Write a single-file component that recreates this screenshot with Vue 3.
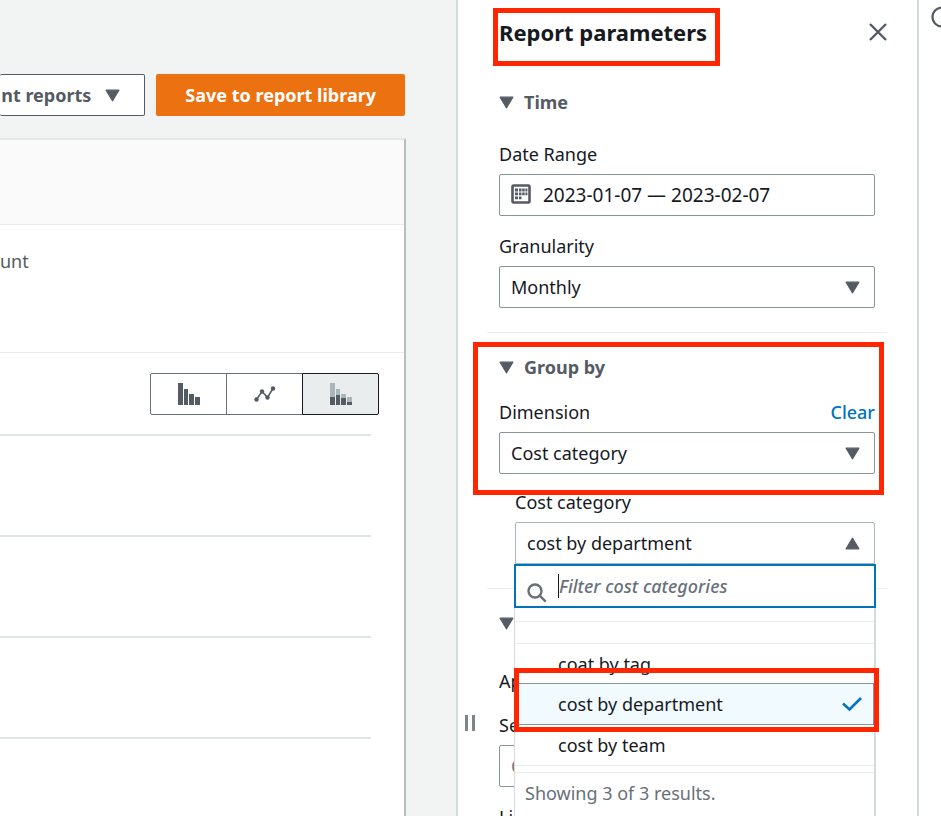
<script setup>
import { ref } from 'vue'

const granularity = ref('Monthly')
const dimension = ref('Cost category')
const category = ref('cost by department')
const filter = ref('')
const chart = ref('stack')
const dates = ref('2023-01-07 — 2023-02-07')
const categories = ['coat by tag', 'cost by department', 'cost by team']
</script>

<template>
  <div class="app">
    <main class="main">
      <div class="toolbar">
        <button class="btn recent" type="button">
          nt reports
          <svg class="caret" viewBox="0 0 14 12"><path d="M1 1h12L7 11z" /></svg>
        </button>
        <button class="btn primary" type="button">Save to report library</button>
      </div>
      <section class="card">
        <header class="card-head"></header>
        <div class="summary">unt</div>
        <div class="chart">
          <div class="segments" role="group" aria-label="Chart type">
            <button type="button" aria-label="Bar" :class="{ on: chart === 'bar' }" @click="chart = 'bar'">
              <svg viewBox="0 0 22 22" width="22" height="22" fill="#545b64">
                <path d="M0 0h5v22H0zM6 6h4v16H6zM11 11h5v11h-5zM17 14h5v8h-5z" />
              </svg>
            </button>
            <button type="button" aria-label="Line" :class="{ on: chart === 'line' }" @click="chart = 'line'">
              <svg viewBox="0 0 22 22" width="22" height="22" fill="#545b64">
                <path d="M2.500 16.500 8 8.500l5.500 6 5.500-9" fill="none" stroke="#545b64" stroke-width="1.500" />
                <circle cx="2.500" cy="16.500" r="2.200" /><circle cx="8" cy="8.500" r="2.200" />
                <circle cx="13.500" cy="14.500" r="2.200" /><circle cx="19" cy="5.500" r="2.200" />
              </svg>
            </button>
            <button type="button" aria-label="Stack" :class="{ on: chart === 'stack' }" @click="chart = 'stack'">
              <svg viewBox="0 0 22 22" width="22" height="22">
                <path d="M0 0h5v14H0zM6 6h4v6H6zM11 11h5v4h-5zM17 14h5v5h-5z" fill="#aab7b8" />
                <path d="M0 14h5v8H0zM6 12h4v10H6zM11 15h5v7h-5zM17 19h5v3h-5z" fill="#545b64" />
              </svg>
            </button>
          </div>
          <div class="grid">
            <div v-for="n in 4" :key="n" class="grid-line"></div>
          </div>
        </div>
      </section>
    </main>

    <aside class="panel">
      <span class="grip" aria-hidden="true"></span>
      <header class="panel-head">
        <h2>Report parameters<span class="mark mark-title"></span></h2>
        <button class="close" type="button" aria-label="Close">
          <svg viewBox="0 0 18 18" width="18" height="18"><path d="M1 1l16 16M17 1L1 17" fill="none" stroke="#545b64" stroke-width="2.400" /></svg>
        </button>
      </header>

      <section class="section time">
        <h3><svg class="caret" viewBox="0 0 14 12"><path d="M1 1h12L7 11z" /></svg>Time</h3>
        <div class="fields">
          <div class="field">
            <label for="dates">Date Range</label>
            <div class="control">
              <svg class="calendar" viewBox="0 0 20 20" width="20" height="20">
                <rect x="1.500" y="1.500" width="17" height="17" rx="1" fill="none" stroke="#545b64" stroke-width="2.600" />
                <path fill="#545b64" d="M4 4.500h3v3H4zM8 4.500h2.500v3H8zM11.200 4.500h2.500v3h-2.500zM14.400 4.500h2v3h-2zM4 8.500h3v2.700H4zM8 8.500h2.500v2.700H8zM11.200 8.500h2.500v2.700h-2.500zM14.400 8.500h2v2.700h-2zM4 12.500h3v2.700H4zM8 12.500h2.500v2.700H8z" />
              </svg>
              <input id="dates" v-model="dates" class="box with-icon" type="text" />
            </div>
          </div>
          <div class="field">
            <label for="granularity">Granularity</label>
            <div class="control">
              <select id="granularity" v-model="granularity" class="box"><option>Monthly</option></select>
              <svg class="caret end" viewBox="0 0 14 12"><path d="M1 1h12L7 11z" /></svg>
            </div>
          </div>
        </div>
      </section>

      <section class="section group">
        <span class="mark mark-group"></span>
        <h3><svg class="caret" viewBox="0 0 14 12"><path d="M1 1h12L7 11z" /></svg>Group by</h3>
        <div class="fields">
          <div class="field">
            <div class="label-row">
              <label for="dimension">Dimension</label>
              <a href="#clear">Clear</a>
            </div>
            <div class="control">
              <select id="dimension" v-model="dimension" class="box"><option>Cost category</option></select>
              <svg class="caret end" viewBox="0 0 14 12"><path d="M1 1h12L7 11z" /></svg>
            </div>
          </div>
          <div class="field nested">
            <label for="category">Cost category</label>
            <div class="control">
              <select id="category" v-model="category" class="box open">
                <option v-for="c in categories" :key="c">{{ c }}</option>
              </select>
              <svg class="caret end" viewBox="0 0 14 12"><path d="M1 11h12L7 1z" /></svg>
              <div class="menu">
                <div class="search">
                  <svg viewBox="0 0 20 20" width="20" height="20"><g fill="none" stroke="#687078" stroke-width="2.400"><circle cx="8" cy="8" r="6.500" /><path d="M12.700 12.700l6 6" /></g></svg>
                  <span class="cursor"></span>
                  <input v-model="filter" type="text" placeholder="Filter cost categories" aria-label="Filter cost categories" />
                </div>
                <div class="spacer"></div>
                <ul role="listbox" aria-label="Cost categories">
                  <li v-for="c in categories" :key="c" role="option" :aria-selected="c === category" :class="{ selected: c === category }" @click="category = c">
                    {{ c }}
                    <template v-if="c === category">
                      <svg viewBox="0 0 20 16" width="20" height="16"><path d="M1 7.500l6.500 6L19 2" fill="none" stroke="#0073bb" stroke-width="2.500" /></svg>
                      <span class="mark mark-option"></span>
                    </template>
                  </li>
                </ul>
                <div class="results">Showing 3 of 3 results.</div>
              </div>
            </div>
          </div>
        </div>
      </section>

      <section class="section filters">
        <h3><svg class="caret" viewBox="0 0 14 12"><path d="M1 1h12L7 11z" /></svg></h3>
        <p>Ap</p>
        <div class="fields">
          <div class="field">
            <label for="service">Se</label>
            <input id="service" class="box" type="text" placeholder="C" />
          </div>
          <p>Li</p>
        </div>
      </section>
    </aside>

    <nav class="rail" aria-label="Help">
      <button type="button" aria-label="Info">
        <svg viewBox="0 0 22 22" width="22" height="22"><circle cx="11" cy="11" r="9.500" fill="none" stroke="#545b64" stroke-width="2.200" /></svg>
      </button>
    </nav>
  </div>
</template>

<style>
body { background: #f2f3f3; }
</style>

<style scoped>
* { box-sizing: border-box; }
.app {
  display: flex;
  height: 100vh;
  overflow: hidden;
  font-family: "Noto Sans", "Open Sans", sans-serif;
  font-size: 18px;
  line-height: 24px;
  color: #16191f;
}
button, input, select { font: inherit; color: inherit; margin: 0; }
button { cursor: pointer; }
h2, h3, p, ul { margin: 0; padding: 0; }
.caret { width: 15px; height: 13px; fill: #545b64; stroke: #545b64; stroke-width: 1px; stroke-linejoin: round; flex: none; }

.main { flex: 1; min-width: 0; display: flex; flex-direction: column; padding: 74px 51px 0 0; background: #f2f3f3; }
.toolbar { display: flex; justify-content: space-between; gap: 11px; }
.btn { height: 42px; display: flex; align-items: center; border-radius: 2px; font-weight: 700; white-space: nowrap; }
.recent { flex: 1; justify-content: flex-end; gap: 14px; padding: 0 24px 0 0; background: #fff; color: #545b64; border: 1px solid #545b64; border-left: 0; }
.primary { padding: 0 29px; border: 0; background: #ec7211; color: #fff; }
.card { flex: 1; margin: 22px -1px 0 0; display: flex; flex-direction: column; background: #fff; border-top: 2px solid #e4e8e8; border-right: 2px solid #b4bfc0; }
.card-head { height: 85px; background: #fafafa; border-bottom: 1px solid #eaeded; }
.summary { height: 128px; padding-top: 24px; color: #545b64; border-bottom: 1px solid #eaeded; }
.chart { padding: 20px 25px 0 0; }
.segments { display: flex; justify-content: flex-end; }
.segments button { width: 77px; height: 42px; margin-left: -1px; padding: 0; display: flex; align-items: center; justify-content: center; background: #fff; border: 1px solid #687078; }
.segments button:first-child { border-radius: 2px 0 0 2px; }
.segments button:last-child { border-radius: 0 2px 2px 0; }
.segments .on { background: #eaeded; border-color: #16191f; }
.grid { margin: 19px 8px 0 0; display: flex; flex-direction: column; gap: 99px; }
.grid-line { height: 2px; background: #dfe4e4; }

.panel { position: relative; flex: none; width: 463px; padding: 16px 30px 0 29px; background: #fff; border-left: 2px solid #d5dbdb; border-right: 2px solid #d5dbdb; }
.grip { position: absolute; left: 7px; top: 715px; width: 10px; height: 16px; border: solid #7d848b; border-width: 0 3px; }
.panel-head { display: flex; justify-content: space-between; align-items: center; padding: 0 0 0 12px; }
h2 { position: relative; font-size: 22px; line-height: 32px; font-weight: 700; }
.close { padding: 0; border: 0; background: none; display: flex; }
h3 { display: flex; align-items: center; gap: 10px; height: 24px; font-size: 18px; line-height: 24px; font-weight: 700; color: #545b64; }
.section { position: relative; padding: 22px 12px 24px; }
.section + .section { border-top: 1px solid #eaeded; }
.time { padding-top: 42px; }
.fields { display: flex; flex-direction: column; gap: 18px; margin-top: 20px; }
.time .fields { margin-top: 28px; }
.group .fields { gap: 16px; margin-top: 21px; }
.field { display: flex; flex-direction: column; gap: 8px; }
.label-row { display: flex; justify-content: space-between; }
.nested { margin-left: 16px; }
a { color: #0073bb; text-decoration: none; font-weight: 500; }
.control { position: relative; }
.box { display: block; width: 100%; height: 42px; padding: 0 11px; border: 1px solid #879596; border-radius: 2px; background: #fff; appearance: none; outline: 0; }
.with-icon { padding-left: 43px; font-size: 19px; }
.calendar { position: absolute; left: 12px; top: 10px; }
.end { position: absolute; right: 15px; top: 15px; pointer-events: none; }
.open { border-color: #aab7b8; border-radius: 2px 2px 0 0; }

.menu { position: absolute; z-index: 1; top: 42px; left: -1px; right: -1px; background: #fff; border: solid #d5dbdb; border-width: 0 2px 1px 1px; }
.search { display: flex; align-items: center; height: 44px; margin: 0 -2px 0 -1px; padding: 0 11px; border: 2px solid #0073bb; }
.search svg { flex: none; margin-top: 14px; }
.search input { flex: 1; min-width: 0; padding: 0; border: 0; outline: 0; background: none; font-style: italic; }
.search input::placeholder { color: #687078; font-weight: 500; opacity: 1; }
.cursor { width: 1px; height: 24px; margin-left: 11px; background: #16191f; }
.spacer { height: 36px; border: solid #eaeded; border-width: 0 0 1px; background: linear-gradient(#eaeded, #eaeded) 0 13px / 100% 1px no-repeat; }
ul { list-style: none; }
li { position: relative; display: flex; align-items: center; justify-content: space-between; height: 40px; padding: 0 11px 0 43px; }
.selected { height: 42px; margin-top: -1px; padding-right: 11px; background: #f1faff; border: solid #879596; border-width: 1px 1px 1px 0; }
.results { height: 60px; padding: 15px 10px 0; color: #687078; border-top: 1px solid #eaeded; background: linear-gradient(#eaeded, #eaeded) 0 6px / 100% 1px no-repeat; }

.mark { position: absolute; z-index: 2; border: 5px solid #ff2600; pointer-events: none; }
.mark-title { left: -6px; top: -8px; right: -13px; height: 58px; }
.mark-group { left: -14px; right: 3px; top: 9px; height: 153px; }
.mark-option { left: -1px; right: -6px; top: -16px; bottom: -8px; }
.filters p { height: 24px; }
.filters > p { margin-top: 34px; }

.rail { flex: none; width: 22px; padding-top: 6px; background: #fff; overflow: hidden; }
.rail button { margin-left: 12px; padding: 0; border: 0; background: none; display: flex; }
.rail svg { flex: none; }
</style>
